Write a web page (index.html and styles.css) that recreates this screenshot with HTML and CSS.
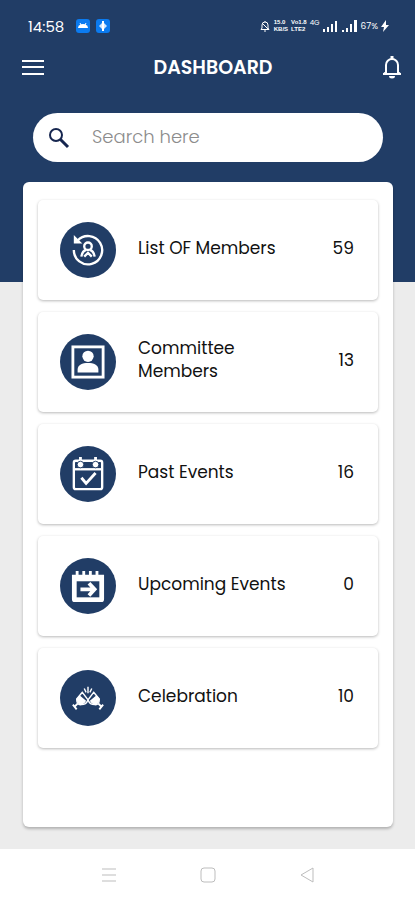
FILE: index.html
```
<!DOCTYPE html>
<html lang="en">
<head>
    <meta charset="UTF-8">
    <meta name="viewport" content="width=device-width, initial-scale=1.0">
    <title>Dashboard</title>
    <link rel="stylesheet" href="styles.css">
</head>
<body>

    <!-- Phone status bar -->
    <div class="status-bar">
        <span class="clock">14:58</span>
        <svg class="app-badge" viewBox="0 0 14 14">
            <rect width="14" height="14" rx="3" fill="#0b7bf0"/>
            <path d="M2 9a5 4 0 0 1 10 0z" fill="#fff"/>
            <path d="M4 4l1 2M10 4L9 6" stroke="#fff"/>
        </svg>
        <svg class="app-badge" viewBox="0 0 14 14">
            <rect width="14" height="14" rx="3" fill="#0b7bf0"/>
            <path d="M7 3l4 4-4 4-4-4z" fill="#cfe6ff"/>
            <path d="M7 2v10" stroke="#fff" stroke-width="2"/>
        </svg>
        <div class="status-right">
            <svg class="mute" viewBox="0 0 12 12" fill="none" stroke="#fff">
                <path d="M2 9.500h8L9 8V5a3 3 0 0 0-6 0v3zM5 11h2M6 1v1M3 3l6 6"/>
            </svg>
            <span class="tiny"><span>15.0</span><span>KB/S</span></span>
            <span class="tiny"><span>Vo1.8</span><span>LTE2</span></span>
            <span class="network">4G</span>
            <svg class="signal" viewBox="0 0 16 12" fill="#fff">
                <path d="M0 9h2v3H0zM4 7h2v5H4zM8 4h2v8H8zM12 1h2v11h-2z"/>
            </svg>
            <svg class="signal" viewBox="0 0 16 12" fill="#fff">
                <path d="M0 10h2v2H0zM4 8h2v4H4zM8 4h2v8H8zM12 0h3v12h-3z"/>
            </svg>
            <span class="battery">67%</span>
            <svg class="bolt" viewBox="0 0 8 12" fill="#fff"><path d="M5 0L0 7h3l-1 5 6-7H5z"/></svg>
        </div>
    </div>

    <header class="app-bar">
        <button class="icon-btn" type="button" aria-label="Menu">
            <svg width="22" height="18" viewBox="0 0 22 18"><path d="M0 3h22M0 9h22M0 16h22" stroke="#fff" stroke-width="2"/></svg>
        </button>
        <h1>DASHBOARD</h1>
        <button class="icon-btn" type="button" aria-label="Notifications">
            <svg width="20" height="24" viewBox="0 0 20 24" fill="none" stroke="#fff" stroke-width="2">
                <path d="M4 18V10a6 6 0 0 1 12 0v8M1 19h18M2 19l2-2M18 19l-2-2"/>
                <path d="M10 1v3" stroke-width="3"/>
                <path d="M7 21a3 2.500 0 0 0 6 0z" fill="#fff" stroke="none"/>
            </svg>
        </button>
    </header>

    <main>
        <label class="search">
            <svg width="22" height="22" viewBox="0 0 22 22" fill="none" stroke="#16264f" stroke-width="2">
                <circle cx="8" cy="8" r="6"/>
                <path d="M12.500 12.500L20 20" stroke-width="3"/>
            </svg>
            <input type="search" placeholder="Search here" aria-label="Search here">
        </label>

        <div class="panel">
            <a class="card" href="#">
                <span class="circle">
                    <svg viewBox="0 0 36 36" fill="none" stroke="#fff" stroke-width="2.500">
                        <path d="M7 8A15 15 0 1 1 3 18"/>
                        <path d="M3 2v9h9z" fill="#fff" stroke="none"/>
                        <circle cx="18" cy="14" r="4"/>
                        <path d="M11 25q1-6 5-7M25 25q-1-6-5-7M14 25l4-4 4 4"/>
                    </svg>
                </span>
                <span class="label">List OF Members</span>
                <span class="count">59</span>
            </a>
            <a class="card" href="#">
                <span class="circle">
                    <svg viewBox="0 0 36 36">
                        <rect x="2" y="2" width="32" height="32" fill="none" stroke="#fff" stroke-width="3"/>
                        <circle cx="18" cy="12" r="6" fill="#fff"/>
                        <path d="M7 29v-3c0-5 5-7 11-7s11 2 11 7v3z" fill="#fff"/>
                    </svg>
                </span>
                <span class="label">Committee Members</span>
                <span class="count">13</span>
            </a>
            <a class="card" href="#">
                <span class="circle">
                    <svg viewBox="0 0 36 36" fill="none" stroke="#fff" stroke-width="2.500">
                        <rect x="3" y="4" width="30" height="30" rx="2"/>
                        <path d="M3 13h30"/>
                        <path d="M10 0v6M26 0v6" stroke-width="3"/>
                        <circle cx="10" cy="8" r="3.500" fill="#fff" stroke="#213d66" stroke-width="1"/>
                        <circle cx="26" cy="8" r="3.500" fill="#fff" stroke="#213d66" stroke-width="1"/>
                        <path d="M11 22l5 6 10-11" stroke-width="3"/>
                    </svg>
                </span>
                <span class="label">Past Events</span>
                <span class="count">16</span>
            </a>
            <a class="card" href="#">
                <span class="circle">
                    <svg viewBox="0 0 36 36">
                        <path d="M1 6h4V2h3v4h4V2h3v4h4V2h3v4h4V2h3v4h6v26q0 3-3 3H4q-3 0-3-3z" fill="#fff"/>
                        <path d="M6 13h24v17H6z" fill="#213d66"/>
                        <path d="M10 21.500h15M19 15l6 6.500-6 6.500" fill="none" stroke="#fff" stroke-width="4"/>
                    </svg>
                </span>
                <span class="label">Upcoming Events</span>
                <span class="count">0</span>
            </a>
            <a class="card" href="#">
                <span class="circle">
                    <!-- Two clinking glasses -->
                    <svg viewBox="0 0 36 36" fill="none" stroke="#fff" stroke-width="1.500">
                        <path d="M12 12l-6 7q0 7 5 6 5 0 7-5zM24 12l6 7q0 7-5 6-5 0-7-5z"/>
                        <path d="M9 15l7 6q-2 4-5 4-5 0-5-6zM27 15l-7 6q2 4 5 4 5 0 5-6z" fill="#fff" stroke="none"/>
                        <path d="M7 24l-3 3M2 25l4 5M29 24l3 3M34 25l-4 5" stroke-width="2"/>
                        <path d="M18 6v7M14 8l2 4M22 8l-2 4"/>
                    </svg>
                </span>
                <span class="label">Celebration</span>
                <span class="count">10</span>
            </a>
        </div>
    </main>

    <!-- System navigation -->
    <nav class="system-nav">
        <button type="button" aria-label="Recent apps">
            <svg width="16" height="16" viewBox="0 0 16 16"><path d="M1 2h14M1 8h14M1 14h14"/></svg>
        </button>
        <button type="button" aria-label="Home">
            <svg width="16" height="16" viewBox="0 0 16 16"><rect x="1" y="1" width="14" height="14" rx="3"/></svg>
        </button>
        <button type="button" aria-label="Back">
            <svg width="16" height="16" viewBox="0 0 16 16"><path d="M14 1v14L2 8z" stroke-linejoin="round"/></svg>
        </button>
    </nav>

</body>
</html>
```
FILE: styles.css
```
* {
    box-sizing: border-box;
}

body {
    display: flex;
    flex-direction: column;
    min-height: 100vh;
    margin: 0;
    background: linear-gradient(#213d66 282px, #ececec 282px);
    font-family: Poppins, Inter, sans-serif;
    color: #111;
}

button {
    padding: 0;
    border: 0;
    background: none;
}

svg {
    display: block;
    flex-shrink: 0;
}

/* Status bar */
.status-bar {
    display: flex;
    align-items: center;
    gap: 6px;
    height: 52px;
    padding: 0 26px 0 28px;
    color: #fff;
}

.clock {
    margin-right: 6px;
    font-size: 15px;
}

.app-badge {
    width: 14px;
    height: 14px;
}

.status-right {
    display: flex;
    align-items: center;
    gap: 3px;
    margin-left: auto;
}

.tiny {
    display: flex;
    flex-direction: column;
    font-family: "Liberation Sans", sans-serif;
    font-size: 6px;
    font-weight: 700;
    line-height: 7px;
}

.network {
    align-self: flex-start;
    font-size: 7px;
    line-height: 7px;
}

.battery {
    font-size: 9px;
}

.mute {
    width: 12px;
    height: 12px;
}

.signal {
    width: 16px;
    height: 12px;
}

.bolt {
    width: 8px;
    height: 12px;
}

/* App bar */
.app-bar {
    display: flex;
    align-items: center;
    justify-content: space-between;
    height: 30px;
    padding: 0 13px 0 22px;
}

.app-bar h1 {
    margin: 0;
    color: #fff;
    font-size: 19px;
    font-weight: 600;
}

/* Search */
main {
    display: flex;
    flex: 1;
    flex-direction: column;
    padding: 31px 22px 22px 23px;
}

.search {
    display: flex;
    align-items: center;
    gap: 22px;
    height: 49px;
    margin: 0 10px 20px;
    padding: 0 15px;
    border-radius: 25px;
    background: #fff;
}

.search input {
    flex: 1;
    min-width: 0;
    padding: 0 0 3px;
    border: 0;
    outline: none;
    background: none;
    font-family: inherit;
    font-size: 18px;
    font-weight: 300;
}

.search input::placeholder {
    color: #8c8c8c;
}

/* Cards */
.panel {
    display: flex;
    flex: 1;
    flex-direction: column;
    gap: 12px;
    padding: 18px 15px;
    border-radius: 6px;
    background: #fff;
    box-shadow: 0 2px 3px rgba(0, 0, 0, 0.25);
}

.card {
    display: flex;
    align-items: center;
    gap: 22px;
    height: 100px;
    padding: 0 24px 0 22px;
    border-radius: 5px;
    background: #fff;
    box-shadow: 0 1px 3px rgba(0, 0, 0, 0.28);
    color: inherit;
    font-size: 17px;
    line-height: 23px;
    text-decoration: none;
}

.circle {
    display: flex;
    flex-shrink: 0;
    align-items: center;
    justify-content: center;
    width: 56px;
    height: 56px;
    border-radius: 50%;
    background: #213d66;
}

.circle svg {
    width: 34px;
    height: 34px;
}

.label {
    flex: 0 1 150px;
    padding-bottom: 4px;
}

.count {
    margin-left: auto;
    padding-bottom: 4px;
}

/* System navigation */
.system-nav {
    display: flex;
    align-items: center;
    justify-content: center;
    gap: 83px;
    height: 51px;
    background: #fff;
}

.system-nav svg {
    fill: none;
    stroke: #bdbdbd;
}
```
